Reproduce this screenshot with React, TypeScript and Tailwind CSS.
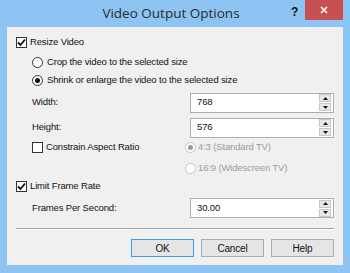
import React from "react";

function Check({ checked }: { checked?: boolean }) {
  return (
    <span className="w-[11px] h-[11px] border border-[#333333] bg-white flex items-center justify-center shrink-0">
      {checked && (
        <svg width="9" height="9" viewBox="0 0 9 9">
          <path d="M1 4.5 L3.5 7 L8 1.5" stroke="#111" strokeWidth="1.8" fill="none" />
        </svg>
      )}
    </span>
  );
}

function Radio({ checked, disabled }: { checked?: boolean; disabled?: boolean }) {
  return (
    <span
      className={
        "w-[11px] h-[11px] rounded-full border bg-white flex items-center justify-center shrink-0 " +
        (disabled ? "border-[#c4c4c4] bg-[#f4f4f4]" : "border-[#333333]")
      }
    >
      {checked && (
        <span className={"w-[5px] h-[5px] rounded-full " + (disabled ? "bg-[#9a9a9a]" : "bg-[#111]")} />
      )}
    </span>
  );
}

function Spin({ value }: { value: string }) {
  return (
    <div className="w-[144px] h-[20px] border border-[#abadb3] bg-white flex items-center pl-[6px] pr-[2px]">
      <span className="flex-1 text-[#111]">{value}</span>
      <div className="flex flex-col gap-[1px]">
        <span className="w-[12px] h-[8px] bg-[#e8e8e8] border border-[#c8c8c8] flex items-center justify-center">
          <svg width="5" height="3" viewBox="0 0 5 3"><path d="M0 3 L2.5 0 L5 3 Z" fill="#111" /></svg>
        </span>
        <span className="w-[12px] h-[8px] bg-[#e8e8e8] border border-[#c8c8c8] flex items-center justify-center">
          <svg width="5" height="3" viewBox="0 0 5 3"><path d="M0 0 L2.5 3 L5 0 Z" fill="#111" /></svg>
        </span>
      </div>
    </div>
  );
}

export default function App() {
  return (
    <div className="w-[350px] h-[273px] bg-[#8ec4f3] flex flex-col overflow-hidden" style={{ fontFamily: "'Liberation Sans', Arial, sans-serif" }}>
      <div className="h-[27px] shrink-0 relative flex items-center justify-center">
        <span className="text-[13.5px] text-[#2b2b2b] pb-[1px] pr-[8px]" style={{ fontFamily: "'Open Sans', 'Noto Sans', sans-serif" }}>
          Video Output Options
        </span>
        <span className="absolute left-[291px] top-[3px] text-[12px] font-bold text-[#111]">?</span>
        <span className="absolute left-[305px] top-0 w-[38px] h-[20px] bg-[#c75050] flex items-center justify-center">
          <svg width="8" height="8" viewBox="0 0 8 8">
            <path d="M1 1 L7 7 M7 1 L1 7" stroke="#fff" strokeWidth="1.6" />
          </svg>
        </span>
      </div>
      <div className="mx-[7px] mb-[8px] flex-1 bg-[#f0f0f0] pt-[5px] pl-[9px] pr-[9px] text-[9.5px] tracking-[-0.15px] text-[#111]">
        <div className="h-[20px] flex items-center gap-[3px]">
          <Check checked />
          <span>Resize Video</span>
        </div>
        <div className="h-[20px] flex items-center gap-[4px] pl-[16px]">
          <Radio />
          <span>Crop the video to the selected size</span>
        </div>
        <div className="h-[16px] flex items-center gap-[4px] pl-[16px]">
          <Radio checked />
          <span>Shrink or enlarge the video to the selected size</span>
        </div>
        <div className="h-[29px] flex items-center justify-between pl-[16px]">
          <span>Width:</span>
          <Spin value="768" />
        </div>
        <div className="h-[21px] flex items-center justify-between pl-[16px]">
          <span>Height:</span>
          <Spin value="576" />
        </div>
        <div className="h-[18px] flex items-center pl-[16px]">
          <div className="flex items-center gap-[3px] w-[153px]">
            <Check />
            <span>Constrain Aspect Ratio</span>
          </div>
          <div className="flex items-center gap-[2px] text-[#9b9b9b]">
            <Radio checked disabled />
            <span>4:3 (Standard TV)</span>
          </div>
        </div>
        <div className="h-[24px] flex items-center pl-[169px]">
          <div className="flex items-center gap-[2px] text-[#9b9b9b]">
            <Radio disabled />
            <span>16:9 (Widescreen TV)</span>
          </div>
        </div>
        <div className="h-[12px] flex items-center gap-[3px]">
          <Check checked />
          <span>Limit Frame Rate</span>
        </div>
        <div className="h-[32px] flex items-center justify-between pl-[16px]">
          <span>Frames Per Second:</span>
          <Spin value="30.00" />
        </div>
        <div className="mt-[4px] h-[1px] bg-[#a0a0a0] border-b border-white box-content" />
        <div className="mt-[9px] flex justify-end gap-[7px]">
          <button className="w-[63px] h-[18px] border border-[#3c9be8] bg-[#e5e5e5] text-[10px] text-[#111]">OK</button>
          <button className="w-[63px] h-[18px] border border-[#acacac] bg-[#e5e5e5] text-[10px] text-[#111]">Cancel</button>
          <button className="w-[63px] h-[18px] border border-[#acacac] bg-[#e5e5e5] text-[10px] text-[#111]">Help</button>
        </div>
      </div>
    </div>
  );
}
